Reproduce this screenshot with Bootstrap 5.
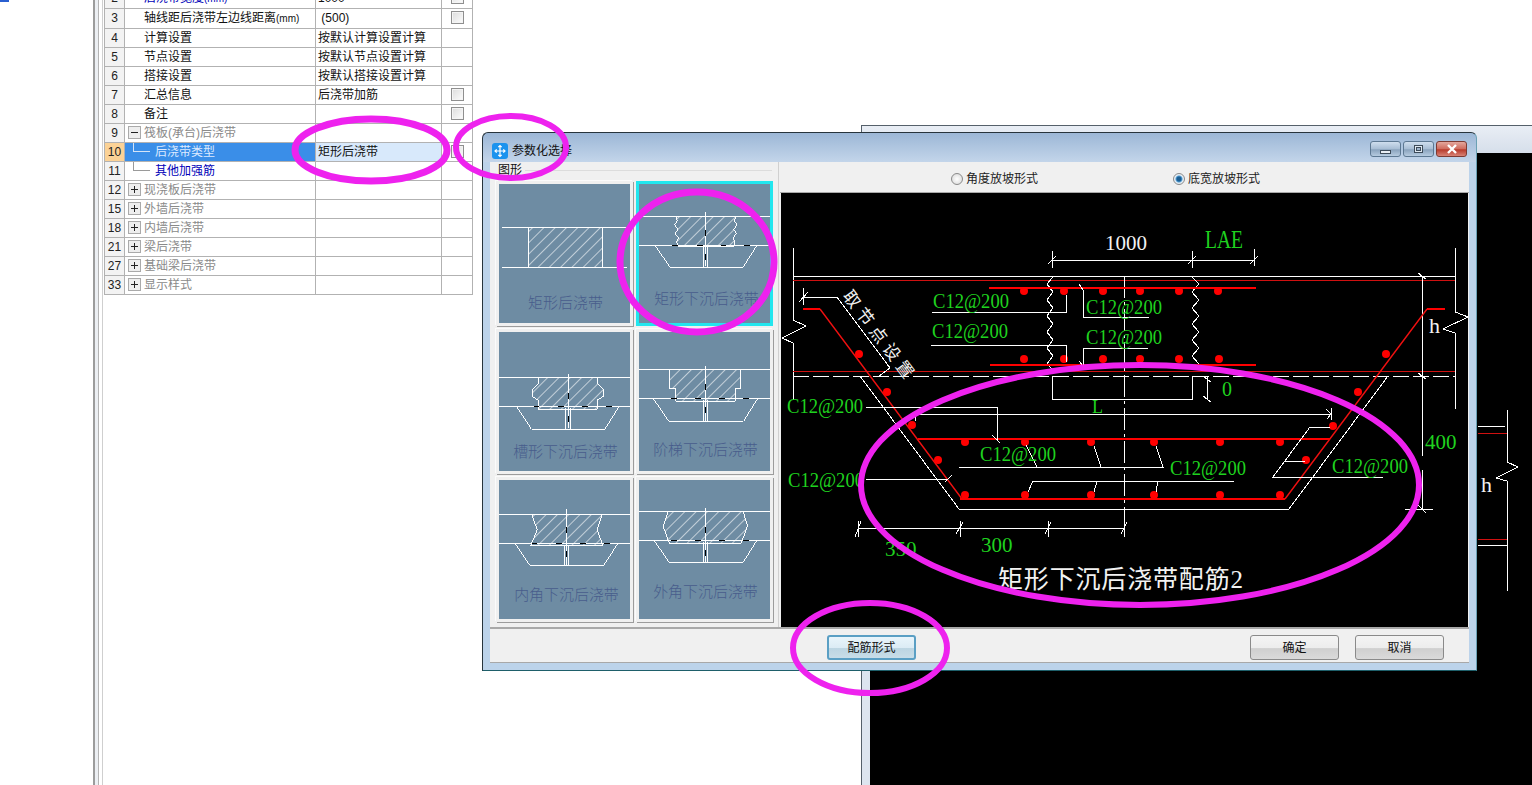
<!DOCTYPE html>
<html lang="zh-CN">
<head>
  <meta charset="UTF-8"/>
  <title>参数化选择</title>
  <link href="https://cdn.jsdelivr.net/npm/bootstrap@5.3.0/dist/css/bootstrap.min.css" rel="stylesheet"/>
  <style>
    html, body { height: 100%; }
    body { background: #fff; font-family: "Liberation Sans", "Noto Sans CJK SC", sans-serif; font-size: 12px; color: #111; overflow: hidden; position: relative; }

    /* left side: tree + property grid */
    .side-blank { width: 93px; }
    .side-mark { width: 9px; height: 2px; background: #2a5fd0; }
    .side-split { width: 6px; background: #eceff3; border-left: 2px solid #9c9c9c; border-right: 1px solid #b4b4b4; }
    .grid-panel { width: 373px; padding-left: 1px; border-left: 1px solid #cfcfcf; margin-left: 3px; margin-top: -12px; }
    .prop-grid { width: 368px; table-layout: fixed; border-collapse: collapse; margin: 0; }
    .prop-grid > tbody > tr > td { height: 19px; padding: 0 0 0 2px; line-height: 18px; border: 1px solid #b2b2b2; white-space: nowrap; overflow: hidden; position: relative; background: #fff; color: #111; font-size: 12px; }
    .prop-grid > tbody > tr > td.cell-num { background: #f3f3f3; padding: 0; text-align: center; color: #222; }
    .prop-grid > tbody > tr > td.cell-name { padding-left: 19px; }
    .prop-grid > tbody > tr > td.cell-sub { padding-left: 30px; color: #0000b8; }
    .prop-grid > tbody > tr > td.cell-group { padding-left: 19px; color: #8a8a8a; }
    .prop-grid > tbody > tr > td.cell-blue { color: #0000b8; }
    .prop-grid > tbody > tr > td.num-on { background: #fbd296; }
    .prop-grid > tbody > tr > td.name-on { background: #3a8ee8; color: #dceaff; }
    .prop-grid > tbody > tr > td.val-on { background: #d8e9fb; }
    .mini-unit { font-size: 10px; }
    .grid-check { display: block; width: 13px; height: 13px; margin: 2px 0 0 7px; border: 1px solid #8f8f8f; background: linear-gradient(135deg, #dcdcdc, #fdfdfd); box-shadow: inset 0 0 0 1px #f4f4f4; }
    .tree-box { position: absolute; left: 3px; top: 2px; width: 13px; height: 13px; }
    .tree-link { position: absolute; left: 8px; top: 0; height: 9px; width: 17px; border-left: 1px solid #9a9a9a; border-bottom: 1px solid #9a9a9a; }
    .name-on .tree-link { border-color: #d5e4f7; }

    /* windows */
    .back-win { position: absolute; left: 861px; top: 125px; width: 680px; height: 670px; border: 1px solid #55606a; background: linear-gradient(#e9eef5, #d5deea 28px, #dde5ef 28px); padding: 27px 0 0 8px; }
    .back-view { height: 100%; background: #000; }
    .param-win { position: absolute; left: 482px; top: 132px; width: 995px; height: 539px; border: 1px solid; border-color: #27343c #6aa0b4 #1e5f6a #27343c; border-radius: 6px 6px 0 0; background: linear-gradient(#9cb7d6, #c3d5ea 29px, #bcd3ea 29px); padding: 0 7px 7px 7px; }
    .win-title { height: 29px; padding-top: 6px; }
    .win-name { margin-left: 4px; font-size: 12px; color: #111; }
    .win-logo { margin-left: 2px; width: 16px; height: 16px; }
    .win-btn { width: 31px; height: 16px; border: 1px solid #5d7892; border-radius: 3px; background: linear-gradient(#cfdeee, #a7bdd4 50%, #8aa3bd 55%, #b6cbe0); display: flex; align-items: center; justify-content: center; }
    .win-close { border-color: #7d3a32; background: linear-gradient(#e3a79d, #cf6a5c 50%, #b73a2b 55%, #d98376); }
    .win-btns { gap: 2px; margin-right: 2px; margin-top: -3px; }
    .win-body { height: 501px; background: #f0f0f0; border-bottom: 1px solid #a8a8a8; }
    .win-main { height: 467px; border-bottom: 2px solid #a9a9a9; }

    .shape-pane { width: 289px; padding: 0 0 0 6px; border-right: 1px solid #d0d0d0; position: relative; }
    .shape-cap { line-height: 17px; height: 19px; padding-left: 2px; display: flex; }
    .shape-cap::after { content: ""; flex: 1; border-top: 1px solid #dcdcdc; margin: 8px 6px 0 3px; }
    .shape-grid { display: grid; grid-template-columns: 137px 137px; grid-auto-rows: 145px; gap: 3px; }
    .shape-cell { background: #6e8ca3; border: 3px solid #f0f0f0; box-shadow: 1px 1px 0 #9c9c9c, -1px -1px 0 #fbfbfb; }
    .shape-on { border-color: #22e6ee; box-shadow: none; }
    .shape-cell svg { display: block; width: 131px; height: 139px; }
    .shape-cell path, .shape-cell polygon, .shape-cell rect { shape-rendering: crispEdges; }
    .shape-label { fill: #485d8c; font-size: 45px; text-anchor: middle; font-family: "Noto Sans CJK SC", sans-serif; font-weight: 300; }

    .view-pane { width: 690px; padding-left: 1px; }
    .radio-bar { height: 31px; border-bottom: 1px solid #a9a9a9; padding: 4px 0 0 171px; }
    .radio-dot { width: 12px; height: 12px; border-radius: 50%; border: 1px solid #8a8a8a; background: radial-gradient(#fff, #d6d6d6); margin-right: 3px; }
    .radio-sel { background: radial-gradient(circle, #1a5d92 0 2px, #4f9ad0 3px, #e6eef5 4px); }
    .radio-opt { width: 222px; color: #222; }
    .cad-view { display: block; width: 687px; height: 434px; margin-left: 1px; background: #000; }
    .cad-view text, .cad-edge text { font-family: "Liberation Serif", "Noto Sans CJK SC", serif; }
    .cad-green { fill: #1fd21f; }
    .cad-white { fill: #f2f2f2; }
    .ln { stroke: #fff; stroke-width: 1; fill: none; shape-rendering: crispEdges; }
    .lr { stroke: #d01010; stroke-width: 1; fill: none; }
    .ls { stroke: #ee1010; stroke-width: 1.400; fill: none; }
    .lb { stroke: #f00; stroke-width: 2.200; fill: none; shape-rendering: crispEdges; }

    .foot-bar { height: 33px; padding: 6px 25px 0 337px; }
    .dlg-btn { width: 89px; height: 25px; padding: 2px 0 0; font-size: 12px; line-height: 21px; color: #111; border: 1px solid #8a8a8a; border-radius: 3px; background: linear-gradient(#f4f4f4, #ededed 50%, #cfcfcf 55%, #dadada); }
    .dlg-btn-main { border: 2px solid #5a9fc4; line-height: 19px; background: linear-gradient(#e9f5fb, #dcecf5 50%, #bcd5e2 55%, #c8dde8); }
    .cad-edge { position: absolute; left: 1477px; top: 400px; width: 55px; height: 200px; }
    .mark-layer { position: absolute; left: 0; top: 0; width: 1532px; height: 785px; pointer-events: none; }
    .mark-layer ellipse { fill: none; stroke: #ee22ee; stroke-width: 6; }
    .mark-layer ellipse.mark-thick { stroke-width: 7; }
  </style>
</head>
<body>
  <main class="d-flex h-100">
    <div class="side-blank"><div class="side-mark"></div></div>
    <div class="side-split"></div>
    <div class="grid-panel">
      <table class="table prop-grid">
        <colgroup><col style="width:20px"/><col style="width:191px"/><col style="width:126px"/><col style="width:31px"/></colgroup>
        <tbody>
          <tr><td class="cell-num">2</td><td class="cell-name cell-blue">后浇带宽度<span class="mini-unit">(mm)</span></td><td>1000</td><td><span class="grid-check"></span></td></tr>
          <tr><td class="cell-num">3</td><td class="cell-name">轴线距后浇带左边线距离<span class="mini-unit">(mm)</span></td><td>&nbsp;(500)</td><td><span class="grid-check"></span></td></tr>
          <tr><td class="cell-num">4</td><td class="cell-name">计算设置</td><td>按默认计算设置计算</td><td></td></tr>
          <tr><td class="cell-num">5</td><td class="cell-name">节点设置</td><td>按默认节点设置计算</td><td></td></tr>
          <tr><td class="cell-num">6</td><td class="cell-name">搭接设置</td><td>按默认搭接设置计算</td><td></td></tr>
          <tr><td class="cell-num">7</td><td class="cell-name">汇总信息</td><td>后浇带加筋</td><td><span class="grid-check"></span></td></tr>
          <tr><td class="cell-num">8</td><td class="cell-name">备注</td><td></td><td><span class="grid-check"></span></td></tr>
          <tr><td class="cell-num">9</td><td class="cell-group"><svg class="tree-box" viewBox="0 0 13 13"><rect x=".5" y=".5" width="12" height="12" fill="#eee" stroke="#aaa"/><path d="M3 6.500h7" stroke="#222"/></svg>筏板(承台)后浇带</td><td></td><td></td></tr>
          <tr><td class="cell-num num-on">10</td><td class="cell-sub name-on"><span class="tree-link"></span>后浇带类型</td><td class="val-on">矩形后浇带</td><td><span class="grid-check"></span></td></tr>
          <tr><td class="cell-num">11</td><td class="cell-sub"><span class="tree-link"></span>其他加强筋</td><td></td><td></td></tr>
          <tr><td class="cell-num">12</td><td class="cell-group"><svg class="tree-box" viewBox="0 0 13 13"><rect x=".5" y=".5" width="12" height="12" fill="#eee" stroke="#aaa"/><path d="M3 6.500h7M6.500 3v7" stroke="#222"/></svg>现浇板后浇带</td><td></td><td></td></tr>
          <tr><td class="cell-num">15</td><td class="cell-group"><svg class="tree-box" viewBox="0 0 13 13"><rect x=".5" y=".5" width="12" height="12" fill="#eee" stroke="#aaa"/><path d="M3 6.500h7M6.500 3v7" stroke="#222"/></svg>外墙后浇带</td><td></td><td></td></tr>
          <tr><td class="cell-num">18</td><td class="cell-group"><svg class="tree-box" viewBox="0 0 13 13"><rect x=".5" y=".5" width="12" height="12" fill="#eee" stroke="#aaa"/><path d="M3 6.500h7M6.500 3v7" stroke="#222"/></svg>内墙后浇带</td><td></td><td></td></tr>
          <tr><td class="cell-num">21</td><td class="cell-group"><svg class="tree-box" viewBox="0 0 13 13"><rect x=".5" y=".5" width="12" height="12" fill="#eee" stroke="#aaa"/><path d="M3 6.500h7M6.500 3v7" stroke="#222"/></svg>梁后浇带</td><td></td><td></td></tr>
          <tr><td class="cell-num">27</td><td class="cell-group"><svg class="tree-box" viewBox="0 0 13 13"><rect x=".5" y=".5" width="12" height="12" fill="#eee" stroke="#aaa"/><path d="M3 6.500h7M6.500 3v7" stroke="#222"/></svg>基础梁后浇带</td><td></td><td></td></tr>
          <tr><td class="cell-num">33</td><td class="cell-group"><svg class="tree-box" viewBox="0 0 13 13"><rect x=".5" y=".5" width="12" height="12" fill="#eee" stroke="#aaa"/><path d="M3 6.500h7M6.500 3v7" stroke="#222"/></svg>显示样式</td><td></td><td></td></tr>
        </tbody>
      </table>
    </div>
  </main>

  <!-- window behind the dialog -->
  <div class="back-win"><div class="back-view"></div></div>
  <svg class="cad-edge" viewBox="1477 400 55 200">
    <path class="ln" d="M1507 410V462L1518 467 1496 478 1507 481V591M1478 426H1505M1478 545H1507"/>
    <path class="lr" d="M1478 433.500H1507M1478 539.500H1507"/>
    <text class="cad-white" x="1481" y="492" font-size="22">h</text>
  </svg>

  <!-- dialog -->
  <div class="param-win">
    <div class="win-title d-flex align-items-center">
      <svg class="win-logo" viewBox="0 0 16 16"><rect width="16" height="16" rx="3" fill="#1b93ee"/><path d="M8 2.500V13.500M3 8H13M6.300 4.200 8 2.500 9.700 4.200M6.300 11.800 8 13.500 9.700 11.800M4.700 6.300 3 8 4.700 9.700M11.300 6.300 13 8 11.300 9.700" fill="none" stroke="#fff" stroke-width="1.200"/></svg>
      <span class="win-name">参数化选择</span>
      <div class="win-btns d-flex ms-auto">
        <div class="win-btn"><svg width="11" height="10" viewBox="0 0 11 10"><rect x=".5" y="6.500" width="10" height="3" fill="#e8eef4" stroke="#3d4b59"/></svg></div>
        <div class="win-btn"><svg width="9" height="8" viewBox="0 0 9 8"><rect x=".5" y=".5" width="8" height="7" fill="#dfe8f1" stroke="#3d4b59"/><rect x="2.500" y="2.500" width="4" height="3" fill="#9db4cc" stroke="#3d4b59"/></svg></div>
        <div class="win-btn win-close"><svg width="12" height="10" viewBox="0 0 12 10"><path d="M2 1 10 9M10 1 2 9" stroke="#fff" stroke-width="2.400"/></svg></div>
      </div>
    </div>
    <div class="win-body">
      <div class="win-main d-flex">
        <section class="shape-pane">
          <div class="shape-cap">图形</div>
          <div class="shape-grid">
            <div class="shape-cell">
              <svg viewBox="57 222 394 418">
                <defs><pattern id="hatch" width="24" height="24" patternUnits="userSpaceOnUse" patternTransform="rotate(45)"><line x1="0" y1="0" x2="0" y2="24" stroke="#fff" stroke-width="3.500"/></pattern></defs>
                <rect x="145" y="352" width="223" height="120" fill="url(#hatch)"/>
                <path d="M65 352H443M65 472H443M145 352V472M368 352V472" fill="none" stroke="#fff" stroke-width="3"/>
                <text class="shape-label" x="257" y="596">矩形后浇带</text>
              </svg>
            </div>
            <div class="shape-cell shape-on">
              <svg viewBox="477 222 394 418">
                <polygon points="587,319 770,319 764,332 772,345 762,358 770,371 760,384 766,397 760,410 595,410 590,397 596,384 586,371 594,358 584,345 592,332" fill="url(#hatch)" stroke="#fff" stroke-width="3"/>
                <path d="M477 319H870M477 406H870M677 305V470M525 406 570 472H790L832 406M670 410V472M682 410V472" fill="none" stroke="#fff" stroke-width="3"/>
                <path d="M577 406H595M650 406H668M725 406H740M793 406H810M677 360V378M677 432V450" stroke="#000" stroke-width="3.500"/>
                <text class="shape-label" x="680" y="583">矩形下沉后浇带</text>
              </svg>
            </div>
            <div class="shape-cell">
              <svg viewBox="57 35 394 418">
                <polygon points="175,172 352,172 352,190 372,210 372,228 352,240 352,268 175,268 175,240 157,228 157,210 175,190" fill="url(#hatch)" stroke="#fff" stroke-width="3"/>
                <path d="M57 172H451M57 259H451M265 160V325M110 259 155 328H375L418 259M258 265V328M272 265V328" fill="none" stroke="#fff" stroke-width="3"/>
                <path d="M162 259H178M235 259H252M306 259H324M378 259H396M265 218V236M265 288V306" stroke="#000" stroke-width="3.500"/>
                <text class="shape-label" x="257" y="410">槽形下沉后浇带</text>
              </svg>
            </div>
            <div class="shape-cell">
              <svg viewBox="477 35 394 418">
                <polygon points="568,148 782,148 782,205 767,205 767,243 587,243 587,205 568,205" fill="url(#hatch)" stroke="#fff" stroke-width="3"/>
                <path d="M477 148H870M477 235H870M677 138V303M522 235 568 303H790L832 235M670 240V303M682 240V303" fill="none" stroke="#fff" stroke-width="3"/>
                <path d="M573 235H590M645 235H662M717 235H735M789 235H807M677 192V210M677 262V280" stroke="#000" stroke-width="3.500"/>
                <text class="shape-label" x="677" y="405">阶梯下沉后浇带</text>
              </svg>
            </div>
            <div class="shape-cell">
              <svg viewBox="57 480 394 418">
                <polygon points="155,583 368,583 352,630 370,678 152,678 172,630" fill="url(#hatch)" stroke="#fff" stroke-width="3"/>
                <path d="M57 583H451M57 670H451M260 568V738M105 670 150 737H372L415 670M254 675V737M266 675V737" fill="none" stroke="#fff" stroke-width="3"/>
                <path d="M155 670H172M228 670H245M300 670H318M372 670H390M260 622V640M260 694V712" stroke="#000" stroke-width="3.500"/>
                <text class="shape-label" x="260" y="840">内角下沉后浇带</text>
              </svg>
            </div>
            <div class="shape-cell">
              <svg viewBox="477 480 394 418">
                <polygon points="565,574 790,574 803,617 785,670 568,670 550,620" fill="url(#hatch)" stroke="#fff" stroke-width="3"/>
                <path d="M477 574H870M477 661H870M677 563V728M522 661 568 728H790L832 661M670 666V728M682 666V728" fill="none" stroke="#fff" stroke-width="3"/>
                <path d="M573 661H590M645 661H662M717 661H735M789 661H807M677 620V638M677 690V708" stroke="#000" stroke-width="3.500"/>
                <text class="shape-label" x="677" y="832">外角下沉后浇带</text>
              </svg>
            </div>
          </div>
        </section>
        <section class="view-pane">
          <div class="radio-bar d-flex align-items-center">
            <label class="radio-opt d-flex align-items-center"><span class="radio-dot"></span>角度放坡形式</label>
            <label class="radio-opt d-flex align-items-center"><span class="radio-dot radio-sel"></span>底宽放坡形式</label>
          </div>
          <svg class="cad-view" viewBox="781 193 687 434">
            <!-- slab outline -->
            <path class="ln" d="M793 248V320L806 326 782 338 793 343V400M793 276H1455M1455 248V312L1468 317 1443 329 1455 333V409"/>
            <path class="ln" stroke-dasharray="16 4" d="M793 376H1455"/>
            <path class="lr" d="M793 280.500H1455M793 371.500H1455"/>
            <path class="ln" stroke-dasharray="22 4 3 4" d="M1124 276V535"/>
            <path class="ln" d="M1053 277 1047 284 1053 292 1047 300 1053 308 1047 316 1053 324 1047 332 1053 340 1047 348 1053 356 1047 364 1053 370"/>
            <path class="ln" d="M1192 277 1199 284 1192 292 1199 300 1192 308 1199 316 1192 324 1199 332 1192 340 1199 348 1192 356 1199 364 1192 370"/>
            <!-- dimensions -->
            <path class="ln" d="M1052 260H1254M1052 251V268M1048 264 1056 256M1192 251V268M1188 264 1196 256M1254 249V266M1250 264 1258 256"/>
            <path class="ln" d="M1422 276V456M1422 470V509M1405 509H1433M1418 273 1426 279M1418 373 1426 379M1418 505 1426 513"/>
            <path class="ln" d="M858 528H1124M858 521V537M855 537 861 521M960 521V537M956 534 963 522M1048 521V537M1045 534 1051 522M1124 521V537M1121 534 1127 522"/>
            <path class="ln" d="M1052 376V399H1192V376M1207 376V400M1203 376 1211 382M1203 396 1211 402"/>
            <path class="ln" d="M915 421V414H1331M1326 409 1331 414 1327 419M1331 408V420"/>
            <!-- concrete outline -->
            <path class="ln" d="M860 376 959 509H1289L1388 376"/>
            <!-- rebar -->
            <path class="ls" d="M820 309 962 499M1285 499 1427 309"/>
            <path class="lb" d="M989 288H1256M990 365H1256M918 439H1330M960 499H1285"/>
            <path class="lb" d="M803 309H820M1427 309H1445"/>
            <g fill="#f00">
              <circle cx="1024" cy="291" r="4"/><circle cx="1064" cy="291" r="4"/><circle cx="1103" cy="291" r="4"/><circle cx="1140" cy="291" r="4"/><circle cx="1179" cy="291" r="4"/><circle cx="1218" cy="291" r="4"/>
              <circle cx="1024" cy="359" r="4"/><circle cx="1064" cy="359" r="4"/><circle cx="1103" cy="359" r="4"/><circle cx="1140" cy="359" r="4"/><circle cx="1179" cy="359" r="4"/><circle cx="1219" cy="359" r="4"/>
              <circle cx="965" cy="442" r="4"/><circle cx="1025" cy="442" r="4"/><circle cx="1091" cy="442" r="4"/><circle cx="1154" cy="442" r="4"/><circle cx="1220" cy="442" r="4"/><circle cx="1280" cy="442" r="4"/>
              <circle cx="965" cy="495" r="4"/><circle cx="1025" cy="495" r="4"/><circle cx="1091" cy="495" r="4"/><circle cx="1154" cy="495" r="4"/><circle cx="1220" cy="495" r="4"/><circle cx="1280" cy="495" r="4"/>
              <circle cx="859" cy="354" r="4"/><circle cx="887" cy="392" r="4"/><circle cx="912" cy="425" r="4"/><circle cx="938" cy="460" r="4"/>
              <circle cx="1386" cy="354" r="4"/><circle cx="1358" cy="392" r="4"/><circle cx="1333" cy="426" r="4"/><circle cx="1306" cy="460" r="4"/>
            </g>
            <!-- leaders -->
            <path class="ln" d="M932 312H1066V295M931 345H1066V362M1149 317H1083V290L1079 284M1148 348H1083V366L1079 361"/>
            <path class="ln" d="M803 288V305M803 297H837L890 368 879 376M799 302 808 292"/>
            <path class="ln" d="M866 407H997V440M992 435 1000 443M866 479H947M945 482 952 475"/>
            <path class="ln" d="M959 467H1163L1156 446M1101 467 1094 446M1037 467 1026 445"/>
            <path class="ln" d="M1234 481H1033L1028 492M1097 481 1094 492M1158 481 1156 492"/>
            <path class="ln" d="M1383 477H1273L1310 427H1330M1285 461H1305"/>
            <!-- labels -->
            <text class="cad-green" x="933" y="308" font-size="20" textLength="76" lengthAdjust="spacingAndGlyphs">C12@200</text>
            <text class="cad-green" x="932" y="338" font-size="20" textLength="76" lengthAdjust="spacingAndGlyphs">C12@200</text>
            <text class="cad-green" x="1086" y="314" font-size="20" textLength="76" lengthAdjust="spacingAndGlyphs">C12@200</text>
            <text class="cad-green" x="1086" y="344" font-size="20" textLength="76" lengthAdjust="spacingAndGlyphs">C12@200</text>
            <text class="cad-green" x="787" y="413" font-size="20" textLength="76" lengthAdjust="spacingAndGlyphs">C12@200</text>
            <text class="cad-green" x="788" y="487" font-size="20" textLength="76" lengthAdjust="spacingAndGlyphs">C12@200</text>
            <text class="cad-green" x="980" y="461" font-size="20" textLength="76" lengthAdjust="spacingAndGlyphs">C12@200</text>
            <text class="cad-green" x="1170" y="475" font-size="20" textLength="76" lengthAdjust="spacingAndGlyphs">C12@200</text>
            <text class="cad-green" x="1332" y="473" font-size="20" textLength="76" lengthAdjust="spacingAndGlyphs">C12@200</text>
            <text class="cad-green" x="1205" y="248" font-size="25" textLength="38" lengthAdjust="spacingAndGlyphs">LAE</text>
            <text class="cad-green" x="1222" y="396" font-size="20">0</text>
            <text class="cad-green" x="1092" y="413" font-size="18">L</text>
            <text class="cad-green" x="1425" y="449" font-size="21">400</text>
            <text class="cad-green" x="885" y="556" font-size="21">350</text>
            <text class="cad-green" x="981" y="552" font-size="21">300</text>
            <text class="cad-white" x="1105" y="250" font-size="21">1000</text>
            <text class="cad-white" x="1429" y="333" font-size="22">h</text>
            <text class="cad-white" transform="translate(842 296) rotate(53)" font-size="17" letter-spacing="5">取节点设置</text>
            <text class="cad-white" x="998" y="588" font-size="25" textLength="245">矩形下沉后浇带配筋2</text>
          </svg>
        </section>
      </div>
      <div class="foot-bar d-flex gap-3">
        <button type="button" class="btn dlg-btn dlg-btn-main">配筋形式</button>
        <button type="button" class="btn dlg-btn ms-auto">确定</button>
        <button type="button" class="btn dlg-btn">取消</button>
      </div>
    </div>
  </div>

  <!-- hand drawn annotations over everything -->
  <svg class="mark-layer" viewBox="0 0 1532 785">
    <ellipse class="mark-thick" cx="371" cy="150" rx="76" ry="31"/>
    <ellipse cx="511" cy="147" rx="55" ry="31"/>
    <ellipse class="mark-thick" cx="697" cy="262" rx="77" ry="70"/>
    <ellipse cx="1140" cy="485" rx="279" ry="120"/>
    <ellipse cx="870" cy="648" rx="77" ry="45"/>
  </svg>
</body>
</html>
